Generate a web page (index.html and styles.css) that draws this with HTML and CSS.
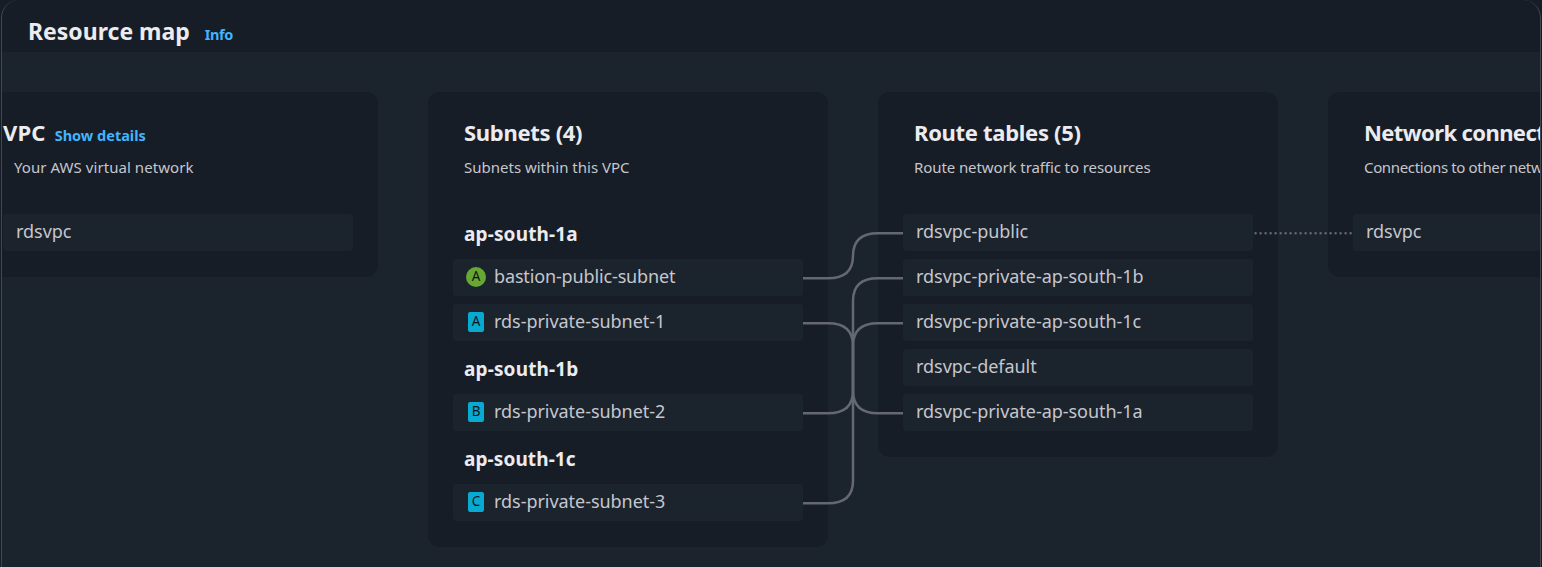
FILE: index.html
```html
<!DOCTYPE html>
<html lang="en">
<head>
<meta charset="utf-8">
<title>Resource map</title>
<link rel="stylesheet" href="styles.css">
</head>
<body>
<section class="panel">
  <header class="panel-header">
    <h2 class="panel-title">Resource map</h2>
    <a class="link info">Info</a>
  </header>
  <div class="board">
    <div class="columns">
      <section class="column column-vpc">
        <div class="column-head"><h3 class="column-title">VPC</h3><a class="link details">Show details</a></div>
        <p class="desc desc-vpc">Your AWS virtual network</p>
        <div class="rows"><div class="row">rdsvpc</div></div>
      </section>
      <section class="column">
        <div class="column-head"><h3 class="column-title">Subnets (4)</h3></div>
        <p class="desc">Subnets within this VPC</p>
        <div class="rows">
          <h4 class="zone">ap-south-1a</h4>
          <div class="row"><span class="badge public">A</span><span class="public-name">bastion-public-subnet</span></div>
          <div class="row"><span class="badge">A</span>rds-private-subnet-1</div>
          <h4 class="zone">ap-south-1b</h4>
          <div class="row"><span class="badge">B</span>rds-private-subnet-2</div>
          <h4 class="zone zone-last">ap-south-1c</h4>
          <div class="row"><span class="badge">C</span>rds-private-subnet-3</div>
        </div>
      </section>
      <section class="column column-routes">
        <div class="column-head"><h3 class="column-title">Route tables (5)</h3></div>
        <p class="desc">Route network traffic to resources</p>
        <div class="rows">
          <div class="row">rdsvpc-public</div>
          <div class="row">rdsvpc-private-ap-south-1b</div>
          <div class="row">rdsvpc-private-ap-south-1c</div>
          <div class="row">rdsvpc-default</div>
          <div class="row">rdsvpc-private-ap-south-1a</div>
        </div>
      </section>
      <section class="column column-network">
        <div class="column-head"><h3 class="column-title">Network connections (1)</h3></div>
        <p class="desc">Connections to other networks</p>
        <div class="rows"><div class="row">rdsvpc</div></div>
      </section>
      <!-- connectors between resources; origin is the top left of the first column -->
      <svg class="connectors" width="1750" height="455" viewBox="0 0 1750 455">
        <path d="M825 186.3H850Q875 186.3 875 163.8Q875 141.3 900 141.3H925"/>
        <path d="M825 231.3H850Q875 231.3 875 253.8V298.8Q875 321.3 900 321.3H925"/>
        <path d="M825 321.3H850Q875 321.3 875 298.8V208.8Q875 186.3 900 186.3H925"/>
        <path d="M825 411.3H850Q875 411.3 875 388.8V253.8Q875 231.3 900 231.3H925"/>
        <path class="dotted" d="M1277.6 141.3H1375"/>
      </svg>
    </div>
  </div>
</section>
</body>
</html>
```

FILE: styles.css
```css
* { box-sizing: border-box; }
body {
  margin: 0;
  height: 567px;
  overflow: hidden;
  padding: 0 1px;
  background: #161d26;
  color: #ebebf0;
  font-family: "Noto Sans", sans-serif;
}
h2, h3, h4, p { margin: 0; }
.panel {
  height: 567px;
  border: 1px solid #424650;
  border-width: 0 1px;
  border-radius: 18px 18px 0 0;
  overflow: hidden;
}
.panel-header {
  height: 52px;
  display: flex;
  align-items: baseline;
  gap: 15px;
  padding: 15px 0 0 26px;
}
.panel-title { font-size: 23px; line-height: 32px; font-weight: 700; }
.link { color: #42b4ff; font-size: 14.5px; font-weight: 700; line-height: 20px; }
.info { letter-spacing: -0.4px; }
.board { height: 515px; padding-top: 40px; background: #1b232d; }
.columns {
  position: relative;
  display: flex;
  align-items: flex-start;
  gap: 50px;
  width: 1750px;
  margin-left: -24px;
}
.column {
  width: 400px;
  flex: none;
  padding: 25px 25px 26px;
  border-radius: 12px;
  background: #161d26;
  white-space: nowrap;
}
.column-head { height: 40px; display: flex; align-items: baseline; gap: 9px; padding: 0 11px; }
.column-vpc .column-head { padding-left: 0; }
.column-vpc .column-title { letter-spacing: 0.2px; }
.column-title { font-size: 22px; line-height: 30px; font-weight: 700; letter-spacing: -0.3px; }
.desc { height: 57px; padding-left: 11px; font-size: 15px; line-height: 20px; color: #c6c6cd; }
.column-vpc .desc { letter-spacing: 0.06px; }
.column-routes .desc { letter-spacing: -0.09px; }
.column-network .column-title { letter-spacing: -0.6px; }
.column-network .desc { letter-spacing: -0.35px; }
.rows { display: flex; flex-direction: column; gap: 8px; }
.row {
  height: 37px;
  display: flex;
  align-items: center;
  padding: 0 0 4px 13px;
  border-radius: 3px;
  background: #1b232d;
  color: #c6c6cd;
  font-size: 18px;
  letter-spacing: -0.04px;
}
.public-name { letter-spacing: -0.14px; }
.zone { height: 37px; padding-left: 11px; font-size: 19px; line-height: 41px; font-weight: 700; letter-spacing: 0.15px; }
.zone-last { letter-spacing: 0.1px; }
.badge {
  width: 16px;
  height: 20px;
  margin: 3px 10px 0 2px;
  border-radius: 2px;
  background: #08aad2;
  color: #0f141a;
  font-size: 13.5px;
  line-height: 19px;
  text-align: center;
}
.public { width: 20px; margin: 3px 8px 0 0; border-radius: 50%; background: #67a832; }
.connectors {
  position: absolute;
  left: 0;
  top: 0;
  fill: none;
  stroke: #656871;
  stroke-width: 2.5;
}
.dotted { stroke-dasharray: 0 5; stroke-linecap: round; }
```
